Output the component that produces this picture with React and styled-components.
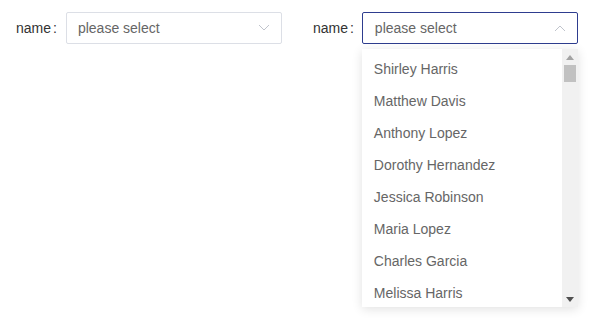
import React from "react";
import styled, { createGlobalStyle } from "styled-components";

const Global = createGlobalStyle`
  html, body { margin: 0; padding: 0; background: #fff; height: 100%; }
  #root { min-height: 100%; }
  body { font-family: "Liberation Sans", Arial, Helvetica, sans-serif; }
`;

const Page = styled.div`
  min-height: 318px;
  box-sizing: border-box;
`;

const Form = styled.div`
  display: flex;
  align-items: flex-start;
  gap: 31px;
  padding: 12px 0 0 16px;
`;

const Item = styled.div`
  display: flex;
  align-items: flex-start;
  gap: ${(p) => p.$gap}px;
`;

const Label = styled.label`
  font-size: 14px;
  color: #333;
  line-height: 32px;
  white-space: nowrap;
`;

const Colon = styled.span`
  margin-left: 2px;
`;

const SelectWrap = styled.div`
  position: relative;
  width: 216px;
  display: flex;
  flex-direction: column;
`;

const SelectBox = styled.div`
  box-sizing: border-box;
  height: 32px;
  width: 216px;
  border: 1px solid ${(p) => (p.$open ? "#2e3d8f" : "#dcdfe6")};
  border-radius: 2px;
  display: flex;
  align-items: center;
  justify-content: space-between;
  padding: 0 11px 0 ${(p) => (p.$open ? 12 : 11)}px;
  background: #fff;
`;

const Placeholder = styled.span`
  font-size: 14px;
  color: #666;
`;

const Chevron = styled.svg`
  width: 12px;
  height: 8px;
  display: block;
`;

const Dropdown = styled.div`
  margin-top: 5px;
  width: 216px;
  height: 258px;
  background: #fff;
  box-shadow: 0 2px 10px rgba(0, 0, 0, 0.12);
  display: flex;
  overflow: hidden;
  z-index: 10;
`;

const List = styled.ul`
  flex: 1;
  list-style: none;
  margin: 0;
  padding: 4px 0 0;
  overflow: hidden;
`;

const Option = styled.li`
  height: 32px;
  line-height: 32px;
  padding: 0 12px;
  font-size: 14px;
  color: #666;
  white-space: nowrap;
`;

const Scrollbar = styled.div`
  width: 16px;
  background: #f1f1f1;
  display: flex;
  flex-direction: column;
  align-items: center;
`;

const Arrow = styled.div`
  height: 16px;
  width: 16px;
  display: flex;
  align-items: center;
  justify-content: center;
`;

const Track = styled.div`
  width: 100%;
  display: flex;
  justify-content: center;
`;

const Thumb = styled.div`
  width: 12px;
  height: 17px;
  background: #c1c1c1;
`;

const Spacer = styled.div`
  flex: 1;
`;

const names = [
  "Shirley Harris",
  "Matthew Davis",
  "Anthony Lopez",
  "Dorothy Hernandez",
  "Jessica Robinson",
  "Maria Lopez",
  "Charles Garcia",
  "Melissa Harris",
];

function ChevronIcon({ up }) {
  return (
    <Chevron viewBox="0 0 12 8">
      <polyline
        points={up ? "1,7 6,2 11,7" : "1,1 6,6 11,1"}
        fill="none"
        stroke="#c0c4cc"
        strokeWidth="1"
      />
    </Chevron>
  );
}

function Tri({ up }) {
  return (
    <svg width="8" height="5" viewBox="0 0 8 5">
      <polygon points={up ? "4,0 8,5 0,5" : "0,0 8,0 4,5"} fill={up ? "#a3a3a3" : "#505050"} />
    </svg>
  );
}

export default function App() {
  return (
    <Page>
      <Global />
      <Form>
        <Item $gap={9}>
          <Label>
            name<Colon>:</Colon>
          </Label>
          <SelectWrap>
            <SelectBox>
              <Placeholder>please select</Placeholder>
              <ChevronIcon />
            </SelectBox>
          </SelectWrap>
        </Item>
        <Item $gap={8}>
          <Label>
            name<Colon>:</Colon>
          </Label>
          <SelectWrap>
            <SelectBox $open>
              <Placeholder>please select</Placeholder>
              <ChevronIcon up />
            </SelectBox>
            <Dropdown>
              <List>
                {names.map((n) => (
                  <Option key={n}>{n}</Option>
                ))}
              </List>
              <Scrollbar>
                <Arrow>
                  <Tri up />
                </Arrow>
                <Track>
                  <Thumb />
                </Track>
                <Spacer />
                <Arrow>
                  <Tri />
                </Arrow>
              </Scrollbar>
            </Dropdown>
          </SelectWrap>
        </Item>
      </Form>
    </Page>
  );
}
